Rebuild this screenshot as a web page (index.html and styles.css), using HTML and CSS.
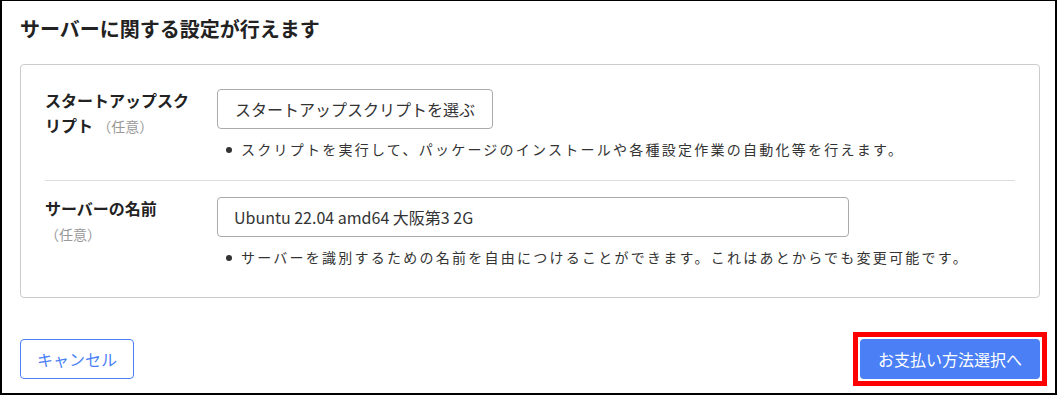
FILE: index.html
```html
<!DOCTYPE html>
<html lang="ja">
<head>
    <meta charset="UTF-8">
    <meta name="viewport" content="width=device-width, initial-scale=1.0">
    <title>サーバー設定</title>
    <link rel="stylesheet" href="styles.css">
</head>
<body>
    <div class="frame">
        <h2 class="title">サーバーに関する設定が行えます</h2>

        <div class="card">
            <div class="row row-script">
                <div class="label">スタートアップスクリプト <span class="optional">（任意）</span></div>
                <div class="field">
                    <button class="select-btn" type="button">スタートアップスクリプトを選ぶ</button>
                    <ul class="notes">
                        <li>スクリプトを実行して、パッケージのインストールや各種設定作業の自動化等を行えます。</li>
                    </ul>
                </div>
            </div>
            <div class="row row-name">
                <div class="label">サーバーの名前 <span class="optional">（任意）</span></div>
                <div class="field">
                    <input class="text-input" type="text" value="Ubuntu 22.04 amd64 大阪第3 2G">
                    <ul class="notes">
                        <li>サーバーを識別するための名前を自由につけることができます。これはあとからでも変更可能です。</li>
                    </ul>
                </div>
            </div>
        </div>

        <div class="actions">
            <button class="cancel" type="button">キャンセル</button>
            <span class="highlight">
                <button class="next" type="button">お支払い方法選択へ</button>
            </span>
        </div>
    </div>
</body>
</html>
```

FILE: styles.css
```css
* {
    box-sizing: border-box;
    margin: 0;
    padding: 0;
}

body {
    font-family: "Noto Sans", "Noto Sans CJK JP", sans-serif;
    color: #333;
    background: #fff;
}

.frame {
    height: 395px;
    border: 2px solid #000;
    border-top-width: 1px;
    padding: 15px 15px 0 18px;
}

.title {
    font-size: 20px;
    font-weight: bold;
    line-height: 28px;
    color: #222;
    margin-bottom: 20px;
}

.card {
    border: 1px solid #ccc;
    border-radius: 4px;
    padding: 0 24px;
}

.row {
    display: flex;
    gap: 22px;
}

.row-script {
    padding: 24px 0 20px;
    border-bottom: 1px solid #ddd;
}

.row-name {
    padding: 16px 0 29px;
}

.label {
    width: 150px;
    flex-shrink: 0;
    font-size: 16px;
    font-weight: bold;
    line-height: 25px;
    color: #222;
}

.optional {
    font-size: 14px;
    font-weight: normal;
    color: #999;
    white-space: nowrap;
}

.field {
    flex: 1;
}

.select-btn {
    height: 40px;
    padding: 0 17px;
    font-family: inherit;
    font-size: 16px;
    color: #333;
    background: #fff;
    border: 1px solid #aaa;
    border-radius: 4px;
}

.text-input {
    display: block;
    width: 632px;
    height: 40px;
    padding: 0 16px;
    font-family: "Noto Sans CJK JP", sans-serif;
    font-size: 16px;
    color: #333;
    border: 1px solid #aaa;
    border-radius: 4px;
}

.notes {
    list-style: none;
    margin-top: 11px;
}

.notes li {
    position: relative;
    padding-left: 24px;
    font-size: 14px;
    letter-spacing: 2.25px;
    line-height: 20px;
}

.notes li::before {
    content: '';
    position: absolute;
    left: 9px;
    top: 7px;
    width: 6px;
    height: 6px;
    border-radius: 50%;
    background: #333;
}

.actions {
    display: flex;
    justify-content: space-between;
    align-items: center;
    margin-top: 34px;
    margin-right: -7px;
}

.actions button {
    height: 40px;
    font-family: inherit;
    font-size: 16px;
    border-radius: 4px;
    cursor: pointer;
}

.cancel {
    width: 114px;
    color: #4a7ff5;
    background: #fff;
    border: 1px solid #4a7ff5;
}

.highlight {
    display: block;
    border: 5px solid #f00;
    padding: 2px;
}

.next {
    display: block;
    width: 180px;
    color: #fff;
    background: #4a7ff5;
    border: none;
}
```
